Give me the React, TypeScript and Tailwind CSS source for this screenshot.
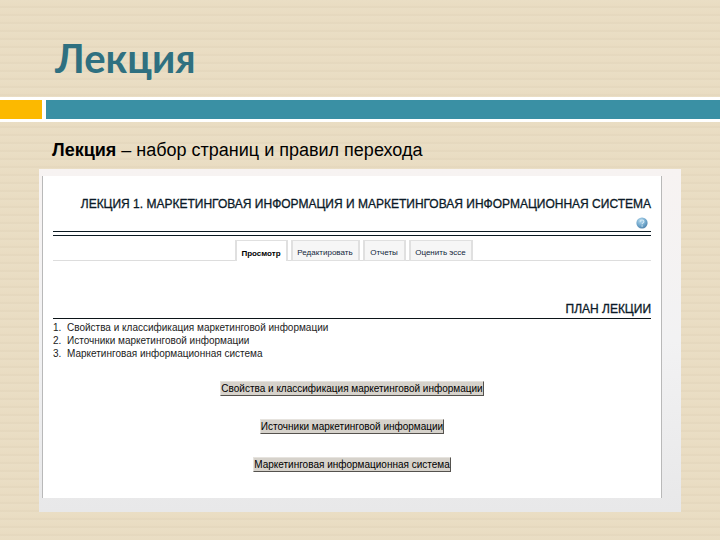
import React from 'react';

const tabs = [
  { label: 'Просмотр', active: true, width: 'w-[53px]' },
  { label: 'Редактировать', active: false, width: 'w-[69px]' },
  { label: 'Отчеты', active: false, width: 'w-[43px]' },
  { label: 'Оценить эссе', active: false, width: 'w-[64px]' },
];

const topics = [
  'Свойства и классификация маркетинговой информации',
  'Источники маркетинговой информации',
  'Маркетинговая информационная система',
];

const HelpIcon = () => (
  <svg viewBox="0 0 12 12" className="w-3 h-3">
    <defs>
      <radialGradient id="helpGradient" cx="40%" cy="30%" r="75%">
        <stop offset="0%" stopColor="#b9dcf0" />
        <stop offset="60%" stopColor="#6fa6cb" />
        <stop offset="100%" stopColor="#4d7fa8" />
      </radialGradient>
    </defs>
    <circle cx="6" cy="6" r="5.6" fill="url(#helpGradient)" />
    <path d="M4.2 4.7C4.2 2.4 7.9 2.5 7.9 4.6C7.9 5.9 6.1 5.8 6.1 7.2" fill="none" stroke="#d3e8f4" strokeWidth="1.1" />
    <circle cx="6.1" cy="9" r="0.7" fill="#d3e8f4" />
  </svg>
);

const LessonTabs = () => (
  <nav className="flex mt-1 h-[21px] text-[8px] leading-[10px]">
    <div className="flex-1 border-b border-[#dddddd]"></div>
    {tabs.map((tab) => (
      <div key={tab.label} className="flex">
        <div className="w-[3px] border-b border-[#dddddd]"></div>
        <a
          href="#"
          className={`${tab.width} flex justify-center items-end pb-[2px] whitespace-nowrap border-x-2 border-t border-[#e0e0e0] ${
            tab.active ? 'bg-white font-bold text-black' : 'bg-[#f6f6f6] text-[#12263c] border-b'
          }`}
        >
          {tab.label}
        </a>
      </div>
    ))}
    <div className="flex-1 border-b border-[#dddddd]"></div>
  </nav>
);

const App = () => {
  return (
    <main className="min-h-screen bg-[#e8dbc1] bg-[repeating-linear-gradient(to_bottom,#eadec5_0px,#e9dcc2_6px,#e2d5bb_7px,#e9dcc2_8px)] font-['Liberation_Sans',Arial,sans-serif] text-black pb-7">
      <h1 className="h-[97px] pt-[34px] pl-[55px] font-['Lato',sans-serif] font-bold text-[40px] leading-[48px] text-[#2f7080]">
        Лекция
      </h1>

      {/* Accent bar */}
      <div className="flex gap-1 h-[25px] py-[3px] bg-white">
        <div className="w-[42px] bg-[#fcb900]"></div>
        <div className="flex-1 bg-[#3a90a4]"></div>
      </div>

      <p className="pt-[17px] pl-[52px] h-[47px] text-[18px] leading-[22px]">
        <b>Лекция</b> – набор страниц и правил перехода
      </p>

      {/* Lesson window */}
      <section className="mx-[39px] pt-[7px] pl-[3px] pr-[19px] pb-[14px] bg-linear-to-b from-[#f7f3f2] via-[#f2f2f3] to-[#e8e8e9]">
        <div className="bg-white border-x border-[#b9b9b9] px-[10px] pb-[26px]">
          <h2 className="pt-5 text-right text-[12px] leading-4 text-[#0b1a28] whitespace-nowrap [-webkit-text-stroke:0.3px]">
            ЛЕКЦИЯ 1. МАРКЕТИНГОВАЯ ИНФОРМАЦИЯ И МАРКЕТИНГОВАЯ ИНФОРМАЦИОННАЯ СИСТЕМА
          </h2>
          <div className="flex justify-end pt-[5px] pr-[3px] pb-[2px]">
            <button type="button" aria-label="Справка">
              <HelpIcon />
            </button>
          </div>
          <div className="h-[5px] border-y border-[#0c1a22]"></div>

          <LessonTabs />

          <h3 className="mt-[41px] pb-[2px] text-right text-[12px] leading-[14px] text-[#0b1a28] border-b border-[#0c1418] [-webkit-text-stroke:0.3px]">
            ПЛАН ЛЕКЦИИ
          </h3>
          <ol className="pt-[2px] text-[10px] leading-[13px] text-[#222222]">
            {topics.map((topic, i) => (
              <li key={topic} className="flex">
                <span className="w-[14px]">{i + 1}.</span>
                {topic}
              </li>
            ))}
          </ol>

          <div className="flex flex-col items-center gap-[23px] pt-[21px]">
            {topics.map((topic) => (
              <button
                key={topic}
                type="button"
                className="h-[15px] bg-[#d6d2cb] border border-t-[#e6e3de] border-l-[#e6e3de] border-r-[#55524e] border-b-[#55524e] text-[10px] leading-[13px] whitespace-nowrap"
              >
                {topic}
              </button>
            ))}
          </div>
        </div>
      </section>
    </main>
  );
};

export default App;
